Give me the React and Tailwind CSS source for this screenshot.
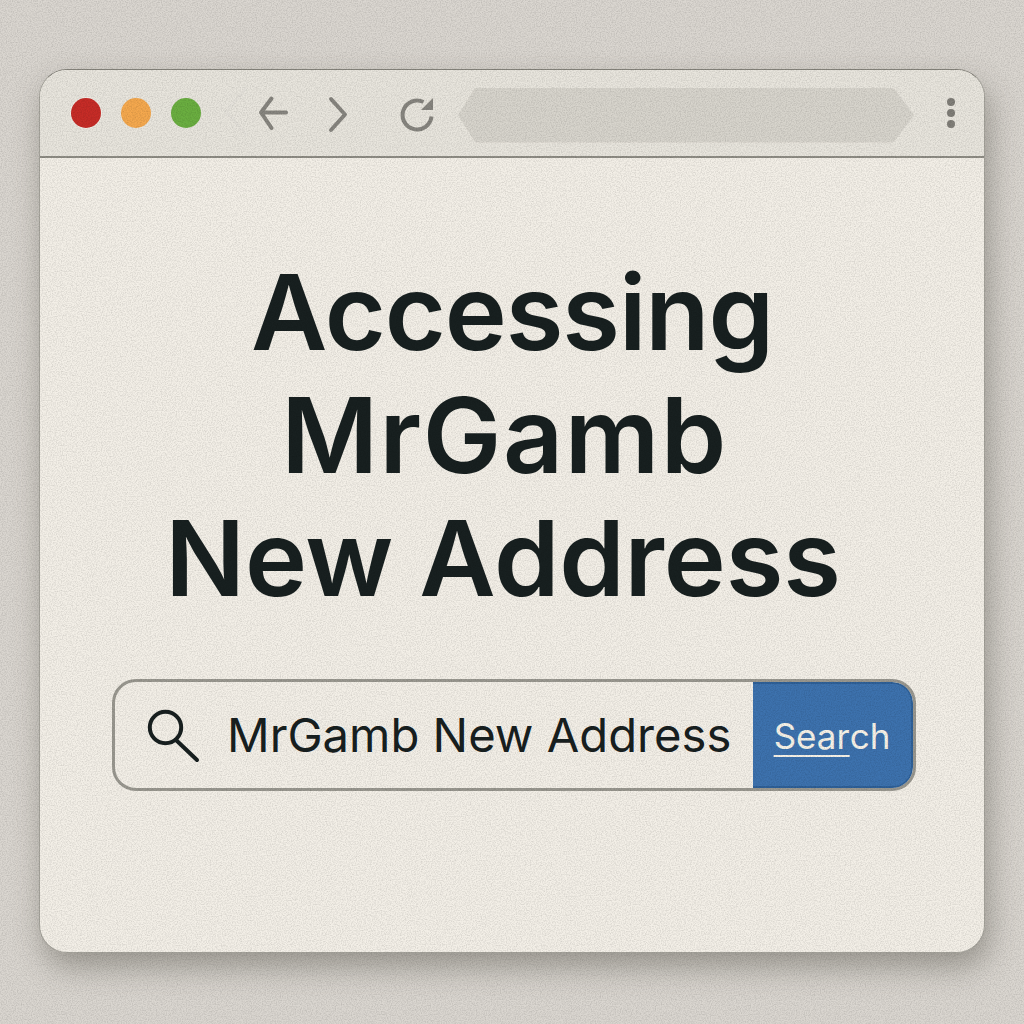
const inter = "font-['Inter','Liberation_Sans',sans-serif]"

function Dot({ className }) {
  return <span className={`block w-[30px] h-[30px] rounded-full ${className}`} />
}

function NavIcons() {
  return (
    <svg width="240" height="60" viewBox="0 0 240 60" fill="none" className="shrink-0 ml-[19px]">
      {/* faint chevron */}
      <path d="M27 4 L6 29 L27 52" stroke="#e4e1da" strokeWidth="3" />
      {/* back */}
      <path d="M66 29.5 H41 M51.5 15.5 L41 29.5 L51.5 45" stroke="#87857f" strokeWidth="4" strokeLinecap="round" strokeLinejoin="round" />
      {/* forward */}
      <path d="M111 16 L125 31.5 L111 47" stroke="#87857f" strokeWidth="4" strokeLinecap="round" strokeLinejoin="round" />
      {/* reload */}
      <path d="M203.5 19 A14.5 14.5 0 1 0 211.5 33.5" stroke="#87857f" strokeWidth="4" />
      <path d="M213 15 V27 H201 Z" fill="#87857f" />
    </svg>
  )
}

function Grain() {
  return (
    <svg className="absolute inset-0 pointer-events-none opacity-[0.16]" width="1024" height="1024">
      <filter id="grain">
        <feTurbulence type="fractalNoise" baseFrequency="0.8" numOctaves="2" stitchTiles="stitch" />
        <feColorMatrix type="matrix" values="0 0 0 0 0  0 0 0 0 0  0 0 0 0 0  1.5 0 0 0 -0.55" />
      </filter>
      <rect width="1024" height="1024" filter="url(#grain)" />
    </svg>
  )
}

export default function App() {
  return (
    <div className={`${inter} relative min-h-screen h-[1024px] overflow-hidden bg-[#dad6d0] pt-[69px] px-[39px]`}>
      <div className="h-[884px] w-[946px] rounded-[28px] overflow-hidden bg-[#f3efe7] border border-[#a5a39b] border-t-[#85837b] shadow-[4px_14px_30px_rgba(70,66,58,0.42)]">
        {/* toolbar */}
        <div className="h-[88px] flex items-center pl-[31px] pr-[28px] bg-[#e8e5dd] border-b-2 border-[#8f8d85]">
          <div className="flex items-center gap-[20px]">
            <Dot className="bg-[#c62c27] ring-1 ring-[#f0ede6]" />
            <Dot className="bg-[#f4a84e]" />
            <Dot className="bg-[#6aae40]" />
          </div>
          <NavIcons />
          <div className="ml-[-2px] mt-[4px] h-[55px] w-[456px] bg-[#d7d4cc] [clip-path:polygon(0_50%,16px_2px,18px_0,calc(100%-22px)_0,calc(100%-19px)_2px,100%_50%,calc(100%-19px)_calc(100%-2px),calc(100%-22px)_100%,18px_100%,16px_calc(100%-2px))]" />
          <div className="ml-auto flex flex-col gap-[3px] mr-[1px]">
            <span className="block w-2 h-2 rounded-full bg-[#807e78]" />
            <span className="block w-2 h-2 rounded-full bg-[#807e78]" />
            <span className="block w-2 h-2 rounded-full bg-[#807e78]" />
          </div>
        </div>

        {/* body */}
        <div className="flex flex-col items-center">
          <h1 className="mt-[92px] flex flex-col items-center text-[105px] leading-[123px] font-semibold text-[#182020]">
            <span className="tracking-[-1.1px]">Accessing</span>
            <span className="tracking-[1.5px] mr-[15px]">MrGamb</span>
            <span className="tracking-[-0.2px] mr-[18px]">New Address</span>
          </h1>
          <div className="mt-[60px] ml-[4px] w-[804px] h-[112px] flex rounded-[24px] border-[3px] border-[#9a9890] overflow-hidden">
            <div className="flex-1 flex items-center pl-[30px]">
              <svg width="56" height="56" viewBox="0 0 56 56" fill="none" className="shrink-0">
                <circle cx="20.5" cy="20.5" r="15.7" stroke="#182020" strokeWidth="4" />
                <path d="M31 33 L52 53" stroke="#182020" strokeWidth="4" strokeLinecap="round" />
              </svg>
              <span className="ml-[26px] text-[47.2px] font-[410] text-[#182020] whitespace-nowrap">MrGamb New Address</span>
            </div>
            <div className="w-[160px] bg-[#3d72ae] rounded-r-[20px] border-2 border-l-0 border-[#2f6199] flex items-center justify-center pt-[3px] text-[35px] text-[#f6f2e8]">
              <span className="underline underline-offset-[6px] decoration-2">Sear</span>ch
            </div>
          </div>
        </div>
      </div>
      <Grain />
    </div>
  )
}
